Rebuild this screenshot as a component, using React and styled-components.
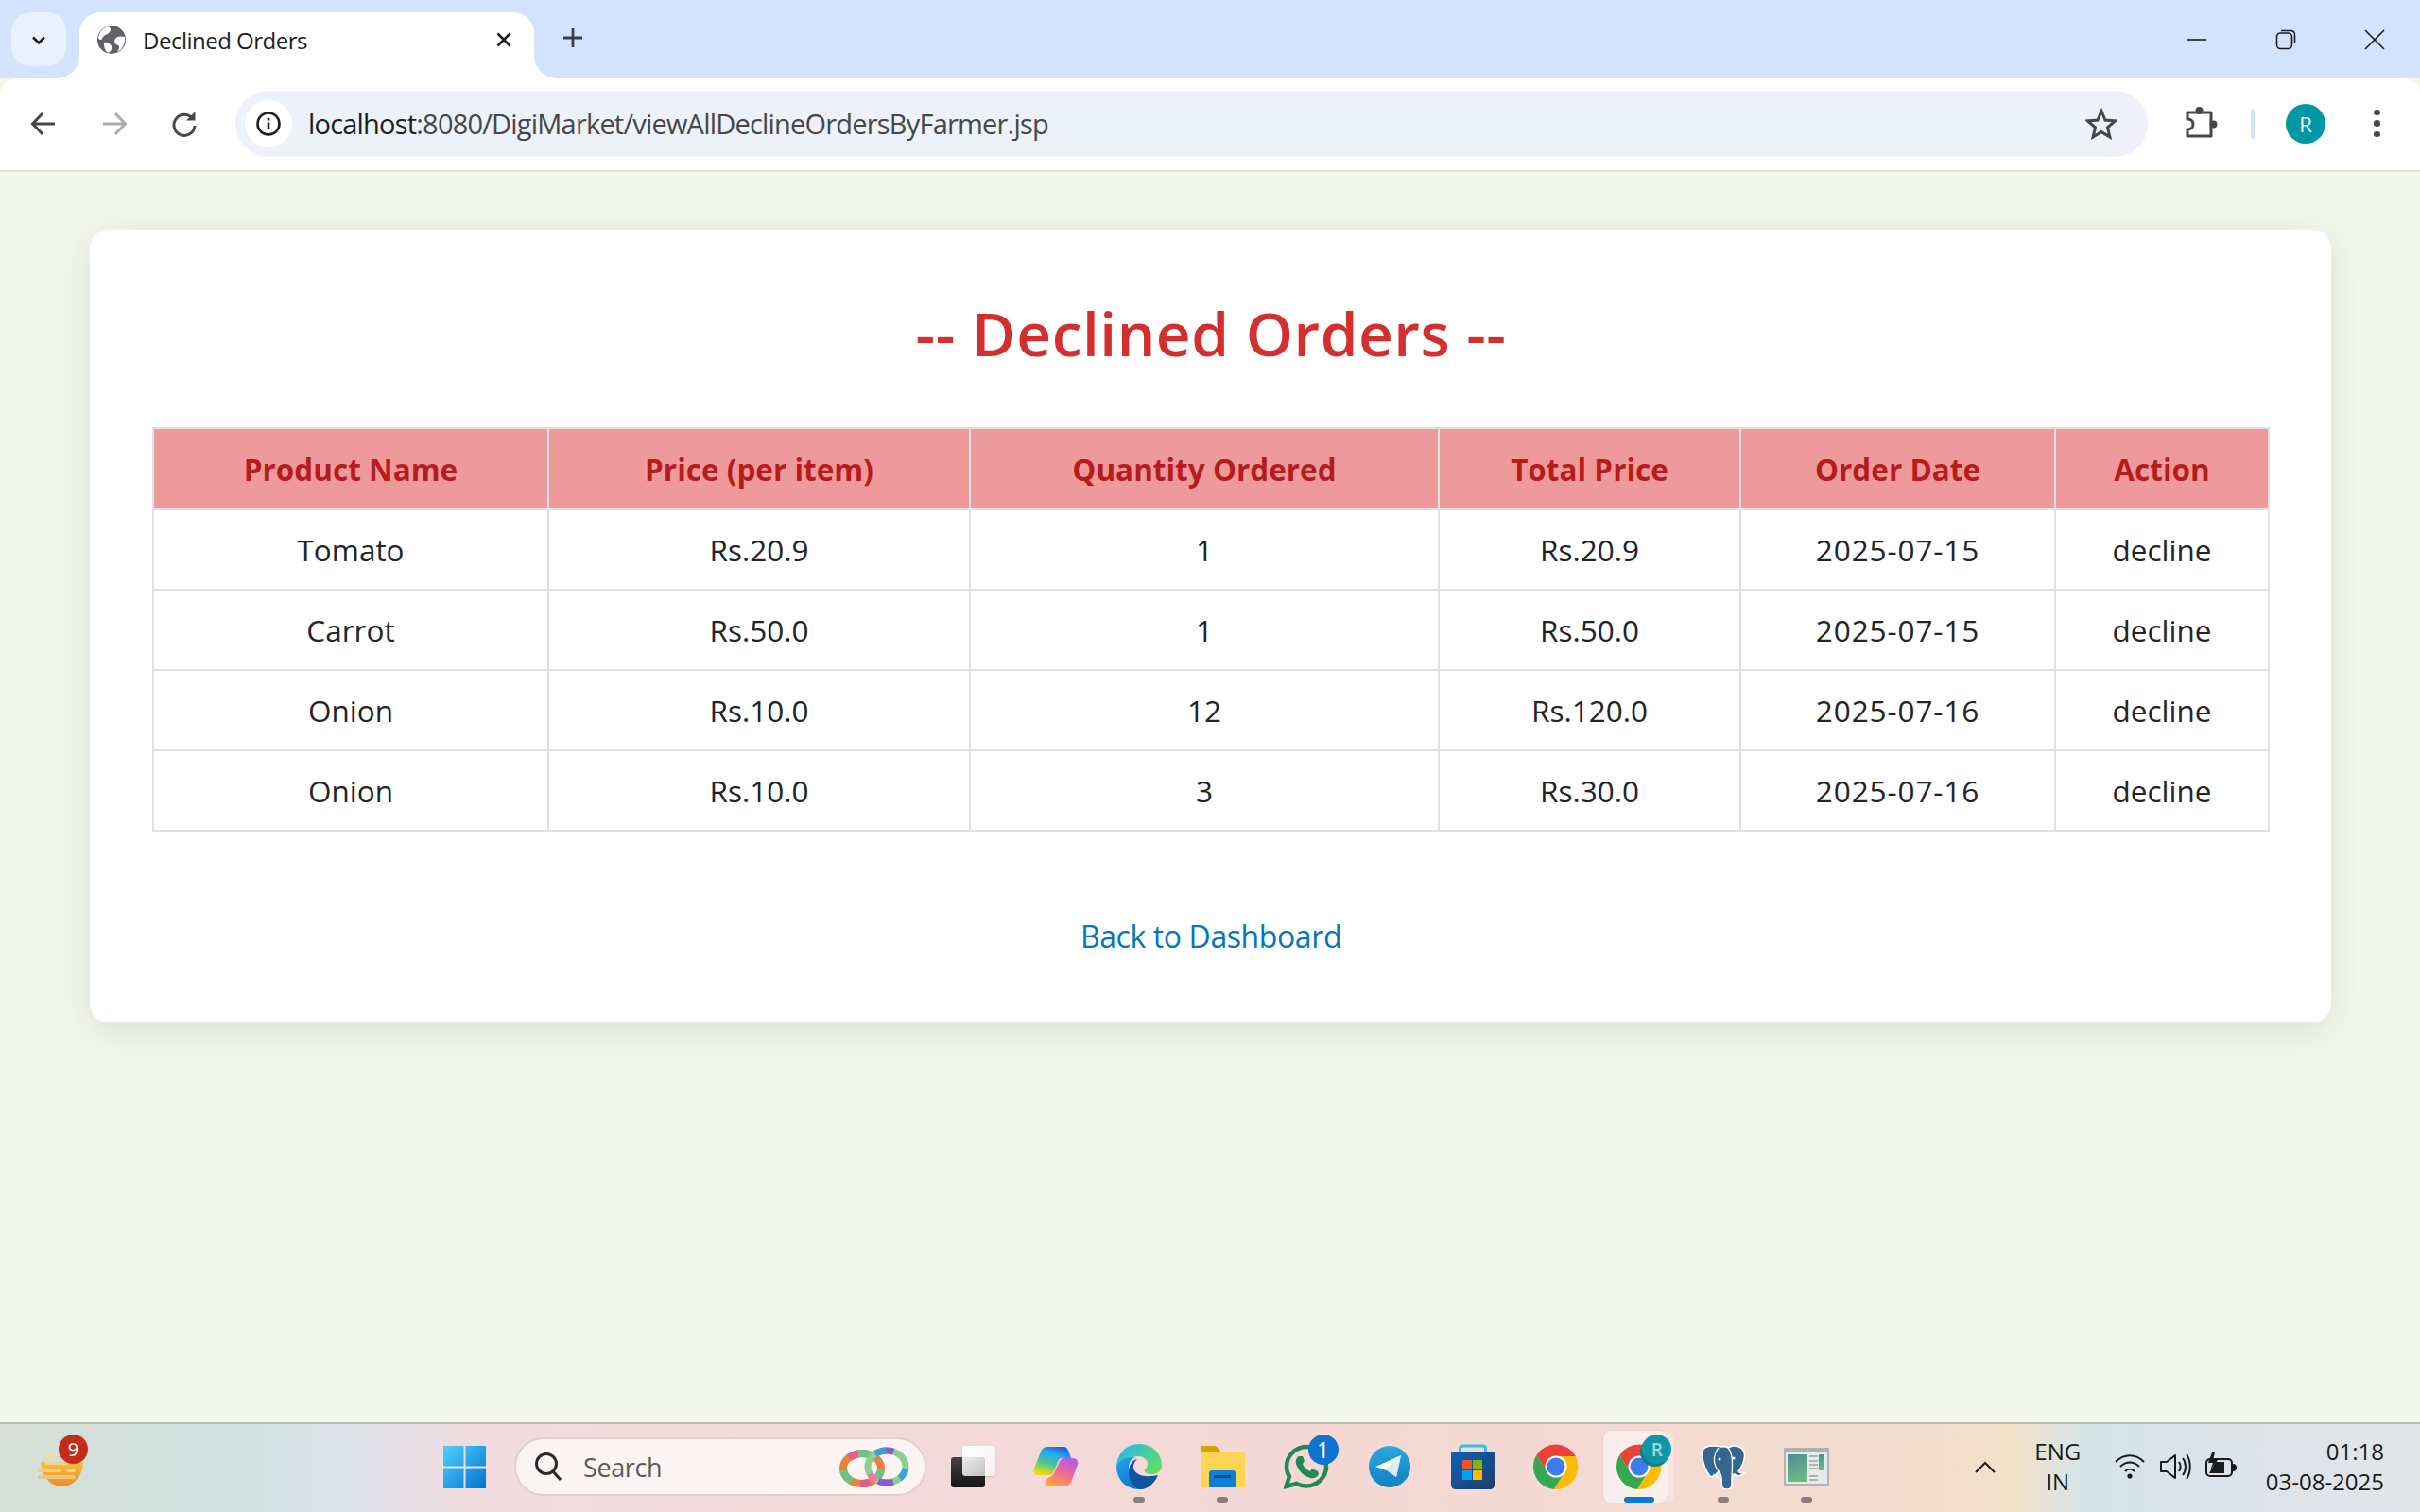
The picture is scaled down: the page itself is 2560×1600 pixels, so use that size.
import React from "react";
import styled, { createGlobalStyle } from "styled-components";

const GlobalStyle = createGlobalStyle`
  html, body {
    margin: 0;
    padding: 0;
    height: 100%;
    overflow: hidden;
  }
  * {
    box-sizing: border-box;
  }
  body {
    font-family: "Open Sans", "Noto Sans", sans-serif;
  }
`;

const rows = [
  ["Tomato", "Rs.20.9", "1", "Rs.20.9", "2025-07-15", "decline"],
  ["Carrot", "Rs.50.0", "1", "Rs.50.0", "2025-07-15", "decline"],
  ["Onion", "Rs.10.0", "12", "Rs.120.0", "2025-07-16", "decline"],
  ["Onion", "Rs.10.0", "3", "Rs.30.0", "2025-07-16", "decline"],
];
const headers = ["Product Name", "Price (per item)", "Quantity Ordered", "Total Price", "Order Date", "Action"];
const colWidths = [418, 446, 496, 319, 333, 226];

function Svg({ size = 48, view = 48, children, ...rest }) {
  return (
    <svg width={size} height={size} viewBox={`0 0 ${view} ${view}`} fill="none" {...rest}>
      {children}
    </svg>
  );
}

function ChromeIcon() {
  return (
    <Svg>
      <path d="M24 24 24 13H44.800A24 24 0 0 0 3.200 12L14.470 29.500Z" fill="#ea4335" />
      <path d="M24 24 14.470 29.500 3.200 12A24 24 0 0 0 22 47.900L33.530 29.500Z" fill="#34a853" />
      <path d="M24 24 33.530 29.500 22 47.900A24 24 0 0 0 44.800 13H24Z" fill="#fbbc04" />
      <circle cx="24" cy="24" r="11.500" fill="#fff" />
      <circle cx="24" cy="24" r="9.500" fill="#3b7ded" />
    </Svg>
  );
}

function StartIcon() {
  return (
    <Svg size={47}>
      <defs>
        <linearGradient id="win" x1="0" y1="0" x2="1" y2="1">
          <stop offset="0" stopColor="#4fd0ff" />
          <stop offset="1" stopColor="#0473cf" />
        </linearGradient>
      </defs>
      <path d="M1 1h22v22H1zM25 1h22v22H25zM1 25h22v22H1zM25 25h22v22H25z" fill="url(#win)" />
    </Svg>
  );
}

function RingsIcon() {
  return (
    <svg width="78" height="44" viewBox="0 0 78 44" fill="none">
      <ellipse cx="26" cy="24" rx="20" ry="16" stroke="#e8823e" strokeWidth="8" />
      <ellipse cx="26" cy="24" rx="20" ry="16" stroke="#6cc28a" strokeWidth="8" strokeDasharray="14 26" />
      <ellipse cx="26" cy="24" rx="20" ry="16" stroke="#e85a8a" strokeWidth="8" strokeDasharray="10 40" strokeDashoffset="30" />
      <ellipse cx="52" cy="22" rx="20" ry="17" stroke="#8ccf90" strokeWidth="7" />
      <ellipse cx="52" cy="22" rx="20" ry="17" stroke="#8a5ad0" strokeWidth="7" strokeDasharray="16 40" strokeDashoffset="-22" />
      <ellipse cx="52" cy="22" rx="20" ry="17" stroke="#3a9ee0" strokeWidth="7" strokeDasharray="12 60" strokeDashoffset="-2" />
      <ellipse cx="52" cy="22" rx="20" ry="17" stroke="#ef7aa0" strokeWidth="7" strokeDasharray="10 70" strokeDashoffset="-40" />
    </svg>
  );
}

const appIcons = [
  {
    id: "copilot",
    icon: (
      <Svg>
        <defs>
          <linearGradient id="copA" x1="0.700" y1="0" x2="0.300" y2="1">
            <stop offset="0" stopColor="#1560dc" />
            <stop offset="0.250" stopColor="#28a4ee" />
            <stop offset="0.600" stopColor="#44c49a" />
            <stop offset="1" stopColor="#f2dc00" />
          </linearGradient>
          <linearGradient id="copB" x1="0.700" y1="0" x2="0.300" y2="1">
            <stop offset="0" stopColor="#b25ce8" />
            <stop offset="0.550" stopColor="#f26a90" />
            <stop offset="1" stopColor="#ffa83c" />
          </linearGradient>
        </defs>
        <path d="M16 3H33C36 3 38 8 40 15H31C28 15 27 16 26 19L22 29C21 32 19 33 16 33H5C1 33-.5 30 1 26L8 8C9 5 12 3 16 3Z" fill="url(#copA)" />
        <path d="M33 15H42C46 15 48 18 47 22L41 38C39 43 36 45 32 45H17C14 45 13 42 14 38 16 35 20 35 22 31L27 20C28 17 30 15 33 15Z" fill="url(#copB)" />
      </Svg>
    ),
    dot: false,
  },
  {
    id: "edge",
    icon: (
      <Svg>
        <defs>
          <linearGradient id="edgeA" x1="0.100" y1="0.100" x2="1" y2="0.700">
            <stop offset="0" stopColor="#2cb8e4" />
            <stop offset="1" stopColor="#5ee060" />
          </linearGradient>
          <linearGradient id="edgeB" x1="0" y1="0.200" x2="0.700" y2="1">
            <stop offset="0" stopColor="#1a9fe8" />
            <stop offset="1" stopColor="#0e6cc4" />
          </linearGradient>
        </defs>
        <path d="M24 0C38 0 48 10 48 23 48 28 44 32 38 32 33 32 30 31 30 28 31 26 33 25 33 21 33 16 28 13 22 13 12 13 3 18 0 26 0 11 10 0 24 0Z" fill="url(#edgeA)" />
        <path d="M0 24C3 17 12 13 21 14 15 15 13 20 13 25 13 33 20 40 28 40 33 40 38 38 43 35 39 43 32 48 24 48 10 48 0 37 0 24Z" fill="url(#edgeB)" />
        <path d="M13 30C13 22 17 17 22 16 18 20 17 24 19 28 22 33 30 36 44 33 40 42 32 48 26 48 18 47 13 39 13 30Z" fill="#0d559f" />
      </Svg>
    ),
    dot: true,
  },
  {
    id: "files",
    icon: (
      <Svg>
        <path d="M1 4c0-1 1-2 2-2h13c1 0 2 1 3 2l3 4h25v6H1z" fill="#d9a100" />
        <path d="M1 9h45c1 0 2 1 2 2v33c0 1-1 2-2 2H2c-1 0-1-1-1-2z" fill="#ffd452" />
        <path d="M10 46V31c0-2 1-3 3-3h22c2 0 3 1 3 3v15z" fill="#0f7fd6" />
        <rect x="15" y="33" width="18" height="3" fill="#0b4f94" />
      </Svg>
    ),
    dot: true,
  },
  {
    id: "whatsapp",
    icon: (
      <Svg>
        <path d="M24 3C12.500 3 3 12.500 3 24c0 4 1 7.500 3 10.500L2.500 45l11-3c3 1.500 7 2.500 10.500 2.500 11.500 0 21-9.500 21-20.500S35.500 3 24 3z" stroke="#1f8a55" strokeWidth="4.500" />
        <path d="M16 13c-2 1-4 4-3 8 2 7 8 13 15 15 4 1 8-1 9-4l-1-3-6-3-2 3c-3-1-7-5-8-8l2-3-2-5z" fill="#1f8a55" />
      </Svg>
    ),
    dot: false,
    badge: "1",
  },
  {
    id: "telegram",
    icon: (
      <Svg>
        <defs>
          <linearGradient id="tg" x1="0" y1="0" x2="0" y2="1">
            <stop offset="0" stopColor="#2ea6de" />
            <stop offset="1" stopColor="#0f82c4" />
          </linearGradient>
        </defs>
        <circle cx="24" cy="24" r="22" fill="url(#tg)" />
        <path d="M9 24 36 12 31 35 21 28Z" fill="#fff" />
        <path d="M36 12 19 27 21 28 31 35Z" fill="#dfecf5" />
      </Svg>
    ),
    dot: false,
  },
  {
    id: "store",
    icon: (
      <Svg>
        <defs>
          <linearGradient id="bag" x1="0" y1="0" x2="1" y2="1">
            <stop offset="0" stopColor="#0f62b4" />
            <stop offset="1" stopColor="#1f3d6c" />
          </linearGradient>
        </defs>
        <path d="M10.500 11V5c0-2 1-3 3-3h21c2 0 3 1 3 3v6" stroke="#2bc0f0" strokeWidth="3" />
        <path d="M1 8h46v35c0 3-2 5-5 5H6c-3 0-5-2-5-5z" fill="url(#bag)" />
        <rect x="13" y="17" width="10" height="10" fill="#f25022" />
        <rect x="24" y="17" width="10" height="10" fill="#7fba00" />
        <rect x="13" y="28" width="10" height="10" fill="#00a4ef" />
        <rect x="24" y="28" width="10" height="10" fill="#ffb900" />
      </Svg>
    ),
    dot: false,
  },
  { id: "chrome", icon: <ChromeIcon />, dot: false },
  { id: "chrome-active", icon: <ChromeIcon />, active: true, profile: "R" },
  {
    id: "postgres",
    icon: (
      <Svg>
        <path
          d="M12 2C5 2 0 6 1.500 13 3 21 6 30 10 34 13 36 16 33 19 29 21 31 22 33 22 37L22.500 44C23 47 25 48 28 48 31 48 33 46 33 43L33 35C33 33 34 32 36 32 38 35 42 34 46 31 43 31 41 31 40 29 43 25 46 19 46.500 13 47 6 42 2 36 2 33 2 31 3 29 4 27 3 25 2.500 22 3 19 2 15 2 12 2Z"
          fill="#336791"
          stroke="#fff"
          strokeWidth="1.500"
        />
        <path d="M19 4C14 10 13 18 16 24L19 29M29 4C34 10 34 20 33 33M22 37C18 35 15 33 13 32" stroke="#fff" strokeWidth="1.300" />
        <circle cx="20" cy="16" r="1.500" fill="#fff" />
        <circle cx="35" cy="15" r="1.500" fill="#fff" />
      </Svg>
    ),
    dot: true,
  },
  {
    id: "window",
    icon: (
      <Svg>
        <defs>
          <linearGradient id="thumb" x1="0" y1="0" x2="0.300" y2="1">
            <stop offset="0" stopColor="#4c8f9c" />
            <stop offset="1" stopColor="#6ab882" />
          </linearGradient>
        </defs>
        <rect x="1" y="5" width="46" height="38" fill="#e8eaea" stroke="#9aa3a8" strokeWidth="1.500" />
        <rect x="1" y="5" width="46" height="3" fill="#a8b0b4" />
        <rect x="4" y="11" width="21" height="29" fill="url(#thumb)" />
        <rect x="37" y="11" width="6" height="17" fill="url(#thumb)" />
        <rect x="27" y="12" width="9" height="2" fill="#aab2b5" />
        <rect x="27" y="17" width="9" height="2" fill="#aab2b5" />
        <rect x="27" y="21" width="9" height="2" fill="#aab2b5" />
        <rect x="27" y="25" width="9" height="2" fill="#aab2b5" />
        <rect x="27" y="33" width="9" height="2" fill="#aab2b5" />
        <rect x="27" y="37" width="9" height="2" fill="#aab2b5" />
      </Svg>
    ),
    dot: true,
  },
];

function App() {
  return (
    <Screen>
      <GlobalStyle />
      <TabStrip>
        <TabSearchButton>
          <Svg size={24} view={24}>
            <path d="M6 9.500 12 15.500 18 9.500" stroke="#1f1f1f" strokeWidth="2.600" />
          </Svg>
        </TabSearchButton>
        <Tab>
          <Svg size={32} view={32}>
            <circle cx="16" cy="16" r="15" fill="#5f6368" />
            <path d="M12 2c5 2 3 5 1 7s-6 2-7 6c-1 2-3 1-4-1 1-6 5-11 10-12zM30 13c-4-1-8-1-10 2s0 6 3 7c2 1 1 4-1 7 5-2 9-9 8-16zM8 19c3-1 7 1 8 4s-1 5-3 7c-3-1-5-4-5-11z" fill="#fff" />
          </Svg>
          <TabTitle>Declined Orders</TabTitle>
          <Svg size={24} view={24}>
            <path d="M5.500 5.500 18.500 18.500M18.500 5.500 5.500 18.500" stroke="#1f1f1f" strokeWidth="2.600" />
          </Svg>
        </Tab>
        <NewTab>
          <Svg size={26} view={26}>
            <path d="M13 3V23M3 13H23" stroke="#3c4043" strokeWidth="2.800" />
          </Svg>
        </NewTab>
        <WindowControls>
          <WindowButton>
            <Svg size={24} view={24}>
              <path d="M2 12H22" stroke="#1a1a1a" strokeWidth="1.600" />
            </Svg>
          </WindowButton>
          <WindowButton>
            <Svg size={24} view={24}>
              <rect x="2.500" y="5" width="16" height="16.500" rx="4" stroke="#1a1a1a" strokeWidth="1.600" />
              <path d="M7 2.500h10c3 0 4.500 1.500 4.500 4.500v9" stroke="#1a1a1a" strokeWidth="1.600" />
            </Svg>
          </WindowButton>
          <WindowButton>
            <Svg size={24} view={24}>
              <path d="M2 2 22 22M22 2 2 22" stroke="#1a1a1a" strokeWidth="1.600" />
            </Svg>
          </WindowButton>
        </WindowControls>
      </TabStrip>

      <Toolbar>
        <NavButton>
          <Svg size={32} view={32}>
            <path d="M28 16H5M15 5 4.500 16 15 27" stroke="#474747" strokeWidth="3" />
          </Svg>
        </NavButton>
        <NavButton>
          <Svg size={32} view={32}>
            <path d="M4 16H27M17 5 27.500 16 17 27" stroke="#ababab" strokeWidth="3" />
          </Svg>
        </NavButton>
        <NavButton>
          <Svg size={32} view={32}>
            <path d="M25 11a11 11 0 1 0 2 7" stroke="#474747" strokeWidth="3" />
            <path d="M18 12.500h9.500V3z" fill="#474747" />
          </Svg>
        </NavButton>
        <Omnibox>
          <SiteInfo>
            <Svg size={28} view={28}>
              <circle cx="14" cy="14" r="11.500" stroke="#1f1f1f" strokeWidth="2.600" />
              <path d="M14 12.500V20M14 8V10.400" stroke="#1f1f1f" strokeWidth="2.600" />
            </Svg>
          </SiteInfo>
          <Url>
            <UrlHost>localhost</UrlHost>:8080/DigiMarket/viewAllDeclineOrdersByFarmer.jsp
          </Url>
          <StarSlot>
            <Svg size={34} view={34}>
              <path d="M17 3.500 21 13l10.500.9-8 6.900 2.400 10.200L17 25.600 8.100 31l2.400-10.200-8-6.900L13 13z" stroke="#474747" strokeWidth="3" />
            </Svg>
          </StarSlot>
        </Omnibox>
        <ExtensionSlot>
          <Svg size={36} view={36}>
            <path d="M2 6H27V31H2V24C6 24 8 21.500 8 18.500 8 15.500 6 13 2 13Z" stroke="#474747" strokeWidth="3" strokeLinejoin="round" />
            <circle cx="14.500" cy="4" r="4" fill="#474747" />
            <circle cx="29.500" cy="18.500" r="4" fill="#474747" />
          </Svg>
        </ExtensionSlot>
        <ToolbarDivider />
        <Avatar>R</Avatar>
        <MenuDots>
          <Dot />
          <Dot />
          <Dot />
        </MenuDots>
      </Toolbar>

      <PageArea>
        <Card>
          <Title>-- Declined Orders --</Title>
          <OrdersTable>
            <colgroup>
              {colWidths.map((w, i) => (
                <col key={i} width={w} />
              ))}
            </colgroup>
            <thead>
              <tr>
                {headers.map((h) => (
                  <HeadCell key={h}>{h}</HeadCell>
                ))}
              </tr>
            </thead>
            <tbody>
              {rows.map((row, i) => (
                <tr key={i}>
                  {row.map((cell, j) => (
                    <BodyCell key={j} $wide={j === 4}>
                      {cell}
                    </BodyCell>
                  ))}
                </tr>
              ))}
            </tbody>
          </OrdersTable>
          <BackLink href="#">Back to Dashboard</BackLink>
        </Card>
      </PageArea>

      <Taskbar>
        <WeatherWidget>
          <Svg size={48} view={48} overflow="visible">
            <defs>
              <linearGradient id="sun" x1="0" y1="0" x2="0" y2="1">
                <stop offset="0" stopColor="#f6c040" />
                <stop offset="1" stopColor="#f28a1c" />
              </linearGradient>
            </defs>
            <path d="M5 19H50A22.500 26 0 0 1 5 19Z" fill="url(#sun)" />
            <rect x="10" y="10" width="10" height="4" rx="2" fill="#f8dc8c" />
            <rect x="10" y="18" width="24" height="4" rx="2" fill="#f0d590" />
            <rect x="2" y="26" width="25" height="4" rx="2" fill="#e9cf8e" />
            <rect x="32" y="26" width="10" height="4" rx="2" fill="#eed48e" />
            <rect x="2" y="33" width="40" height="4" rx="2" fill="#e3c88c" />
          </Svg>
          <WeatherBadge>9</WeatherBadge>
        </WeatherWidget>
        <StartButton>
          <StartIcon />
        </StartButton>
        <SearchBox>
          <Svg size={34} view={34}>
            <circle cx="14" cy="14" r="10.500" stroke="#2a2a2a" strokeWidth="3" />
            <path d="M21 22 29 31" stroke="#2a2a2a" strokeWidth="3" />
          </Svg>
          <SearchText>Search</SearchText>
          <RingsIcon />
        </SearchBox>
        <TaskView>
          <TaskViewBack />
          <TaskViewFront />
        </TaskView>
        {appIcons.map((app) => (
          <AppSlot key={app.id}>
            {app.active && <ActiveBackdrop />}
            {app.icon}
            {app.badge && <CountBadge>{app.badge}</CountBadge>}
            {app.profile && <ProfileBadge>{app.profile}</ProfileBadge>}
            {app.dot && <RunningDot />}
            {app.active && <ActiveBar />}
          </AppSlot>
        ))}
        <Tray>
          <Svg size={24} view={24}>
            <path d="M2 18 12 8 22 18" stroke="#1a1a1a" strokeWidth="2" />
          </Svg>
          <LangBlock>
            <span>ENG</span>
            <span>IN</span>
          </LangBlock>
          <TrayIcons>
            <Svg size={34} view={34}>
              <path d="M2 12c9-9 21-9 30 0M7 17c6-6 14-6 20 0M12 22c3-3 7-3 10 0" stroke="#1a1a1a" strokeWidth="2" />
              <circle cx="17" cy="27" r="2.600" fill="#1a1a1a" />
            </Svg>
            <Svg size={34} view={34}>
              <path d="M2 12v10h6l9 7V5l-9 7z" stroke="#1a1a1a" strokeWidth="2" strokeLinejoin="round" />
              <path d="M21 12c2 3 2 7 0 10M25 8c4 5 4 13 0 18M29 4c5 7 5 19 0 26" stroke="#1a1a1a" strokeWidth="2" />
            </Svg>
            <Svg size={34} view={34}>
              <rect x="2" y="9" width="27" height="18" rx="4" stroke="#1a1a1a" strokeWidth="2" />
              <path d="M5 24 12 12h9v12z" fill="#1a1a1a" />
              <path d="M8 2 4 13h5l-3 8 8-11H9l2-8z" fill="#1a1a1a" />
              <path d="M30 14c3 0 4 2 4 4s-1 4-4 4z" fill="#1a1a1a" />
            </Svg>
          </TrayIcons>
          <Clock>
            <span>01:18</span>
            <span>03-08-2025</span>
          </Clock>
        </Tray>
      </Taskbar>
    </Screen>
  );
}

export default App;

const Screen = styled.div`
  display: flex;
  flex-direction: column;
  width: 2560px;
  height: 1600px;
  background: #f1f8e9;
`;

const TabStrip = styled.div`
  display: flex;
  align-items: flex-end;
  height: 83px;
  flex: none;
  padding-left: 12px;
  background: #d3e3fd;
`;

const TabSearchButton = styled.div`
  display: flex;
  align-items: center;
  justify-content: center;
  width: 58px;
  height: 57px;
  margin-bottom: 13px;
  border-radius: 20px;
  background: #e9f0fe;
`;

const Tab = styled.div`
  position: relative;
  display: flex;
  align-items: center;
  width: 481px;
  height: 70px;
  margin-left: 14px;
  padding: 0 20px 12px 18px;
  border-radius: 22px 22px 0 0;
  background: #fff;
  gap: 17px;

  &::before,
  &::after {
    content: "";
    position: absolute;
    bottom: 0;
    width: 24px;
    height: 24px;
  }
  &::before {
    left: -24px;
    background: radial-gradient(circle at 0 0, transparent 23.500px, #fff 24px);
  }
  &::after {
    right: -24px;
    background: radial-gradient(circle at 100% 0, transparent 23.500px, #fff 24px);
  }
`;

const TabTitle = styled.span`
  flex: 1;
  font-size: 24px;
  letter-spacing: -0.5px;
  color: #1f1f1f;
`;

const NewTab = styled.div`
  display: flex;
  align-items: center;
  justify-content: center;
  width: 40px;
  height: 40px;
  margin: 0 0 23px 21px;
`;

const WindowControls = styled.div`
  display: flex;
  margin-left: auto;
  margin-bottom: 29px;
  padding-right: 1px;
`;

const WindowButton = styled.div`
  display: flex;
  align-items: center;
  justify-content: center;
  width: 94px;
  height: 24px;
`;

const Toolbar = styled.div`
  display: flex;
  align-items: center;
  height: 99px;
  flex: none;
  padding: 0 0 2px 30px;
  border-bottom: 2px solid #e0e0e0;
  border-top-left-radius: 18px;
  border-top-right-radius: 18px;
  background: #fff;
`;

const NavButton = styled.div`
  display: flex;
  align-items: center;
  justify-content: center;
  width: 32px;
  margin-right: 42.500px;
`;

const Omnibox = styled.div`
  display: flex;
  align-items: center;
  width: 2023px;
  height: 70px;
  margin-left: -4.500px;
  padding: 0 32px 0 10px;
  border-radius: 35px;
  background: #ecf1fa;
`;

const SiteInfo = styled.div`
  display: flex;
  align-items: center;
  justify-content: center;
  width: 50px;
  height: 50px;
  border-radius: 50%;
  background: #fff;
`;

const Url = styled.div`
  flex: 1;
  margin-left: 17px;
  font-size: 29px;
  letter-spacing: -0.8px;
  color: #474747;
`;

const UrlHost = styled.span`
  color: #1f1f1f;
`;

const StarSlot = styled.div`
  display: flex;
`;

const ExtensionSlot = styled.div`
  display: flex;
  margin-left: 40px;
`;

const ToolbarDivider = styled.div`
  width: 4px;
  height: 32px;
  margin-left: 33px;
  border-radius: 2px;
  background: #d3e3fd;
`;

const Avatar = styled.div`
  display: flex;
  align-items: center;
  justify-content: center;
  width: 42px;
  height: 42px;
  margin-left: 33px;
  border-radius: 50%;
  background: #0097a7;
  color: #fff;
  font-size: 22px;
`;

const MenuDots = styled.div`
  display: flex;
  flex-direction: column;
  gap: 5px;
  margin-left: 51px;
`;

const Dot = styled.span`
  width: 6.500px;
  height: 6.500px;
  border-radius: 50%;
  background: #474747;
`;

const PageArea = styled.div`
  flex: 1;
  padding: 61px 94px 0 95px;
  background: #f1f8e9;
`;

const Card = styled.div`
  display: flex;
  flex-direction: column;
  align-items: center;
  height: 839px;
  padding: 0 66px 0 67px;
  border-radius: 20px;
  background: #fff;
  box-shadow: 0 8px 40px rgba(0, 0, 0, 0.1);
`;

const Title = styled.h1`
  margin: 70px 0 59px;
  font-size: 64px;
  font-weight: 600;
  line-height: 80px;
  letter-spacing: 0.5px;
  color: #d32f2f;
`;

const OrdersTable = styled.table`
  width: 2238px;
  border-collapse: collapse;
  table-layout: fixed;
`;

const HeadCell = styled.th`
  height: 86px;
  padding: 0;
  border: 2px solid #dee2e6;
  background: #ef9a9a;
  font-size: 31.500px;
  font-weight: 700;
  color: #b71c1c;
`;

const BodyCell = styled.td`
  height: 85px;
  padding: 0;
  border: 2px solid #dee2e6;
  text-align: center;
  font-size: 31.500px;
  letter-spacing: ${(props) => (props.$wide ? "0.9px" : "0")};
  color: #212529;
`;

const BackLink = styled.a`
  margin-top: 89px;
  font-size: 32px;
  letter-spacing: -0.4px;
  color: #0277bd;
  text-decoration: none;
`;

const Taskbar = styled.div`
  display: flex;
  align-items: center;
  height: 95px;
  flex: none;
  padding: 0 0 3px 38px;
  border-top: 2px solid #c4bcbc;
  background: linear-gradient(
    90deg,
    #d5dfd7 0,
    #d0e2e0 270px,
    #dce3ec 350px,
    #f0dcdf 500px,
    #f5d8d4 1400px,
    #f3dccf 2000px,
    #f2e2c8 2130px,
    #d3e5ea 2210px,
    #dfe3ea 2400px,
    #e2e4e8 2560px
  );
`;

const WeatherWidget = styled.div`
  position: relative;
  width: 48px;
  height: 48px;
  margin-right: 382px;
`;

const WeatherBadge = styled.span`
  position: absolute;
  top: -10px;
  left: 24px;
  display: flex;
  align-items: center;
  justify-content: center;
  width: 31px;
  height: 31px;
  border-radius: 50%;
  background: #c42b1c;
  color: #fff;
  font-size: 20px;
`;

const StartButton = styled.div`
  display: flex;
  width: 47px;
  margin-right: 29px;
`;

const SearchBox = styled.div`
  display: flex;
  align-items: center;
  width: 436px;
  height: 62px;
  padding: 0 14px 0 18px;
  border: 2px solid #e2cfce;
  border-radius: 31px;
  background: #fbf4f3;
`;

const SearchText = styled.span`
  flex: 1;
  margin-left: 19px;
  font-size: 27px;
  letter-spacing: -0.4px;
  color: #5a5a5a;
`;

const TaskView = styled.div`
  position: relative;
  width: 48px;
  height: 48px;
  margin: 0 20px 0 25px;
`;

const TaskViewBack = styled.div`
  position: absolute;
  left: 1px;
  top: 14px;
  width: 36px;
  height: 32px;
  border-radius: 3px;
  background: linear-gradient(#454545, #141414);
`;

const TaskViewFront = styled.div`
  position: absolute;
  left: 13px;
  top: 2px;
  width: 35px;
  height: 32px;
  border-radius: 3px;
  background: linear-gradient(135deg, rgba(255, 255, 255, 0.95), rgba(255, 255, 255, 0.65));
  box-shadow: 0 1px 2px rgba(0, 0, 0, 0.15);
`;

const AppSlot = styled.div`
  position: relative;
  isolation: isolate;
  display: flex;
  align-items: center;
  justify-content: center;
  width: 88.200px;
  height: 48px;
`;

const ActiveBackdrop = styled.div`
  position: absolute;
  z-index: -1;
  top: -14px;
  left: 6px;
  width: 68px;
  height: 76px;
  border-radius: 8px;
  background: #f9eeeb;
  box-shadow: 0 0 2px rgba(160, 120, 120, 0.3), 8px 0 0 -1px #f6e4e0;
`;

const CountBadge = styled.span`
  position: absolute;
  top: -10px;
  left: 46px;
  display: flex;
  align-items: center;
  justify-content: center;
  width: 32px;
  height: 32px;
  border-radius: 50%;
  background: #0d74d0;
  color: #fff;
  font-size: 23px;
`;

const ProfileBadge = styled(CountBadge)`
  left: 47px;
  width: 31px;
  height: 31px;
  background: #0f97a5;
  box-shadow: -2px 3px 0 #0c808d;
  color: #9fd8de;
  font-size: 19px;
  font-weight: 600;
`;

const RunningDot = styled.span`
  position: absolute;
  left: 38px;
  bottom: -14px;
  width: 12px;
  height: 6px;
  border-radius: 3px;
  background: #8a7c7c;
`;

const ActiveBar = styled.span`
  position: absolute;
  left: 28px;
  bottom: -14px;
  width: 32px;
  height: 6px;
  border-radius: 3px;
  background: #0a78d4;
`;

const Tray = styled.div`
  display: flex;
  align-items: center;
  margin-left: auto;
  padding-right: 38px;
`;

const LangBlock = styled.div`
  display: flex;
  flex-direction: column;
  align-items: center;
  width: 64px;
  margin: 0 27px 0 33px;
  font-size: 24px;
  line-height: 32px;
  color: #1a1a1a;
`;

const TrayIcons = styled.div`
  display: flex;
  gap: 14px;
`;

const Clock = styled.div`
  display: flex;
  flex-direction: column;
  align-items: flex-end;
  margin-left: 31px;
  font-size: 24px;
  line-height: 32px;
  color: #1a1a1a;
`;
